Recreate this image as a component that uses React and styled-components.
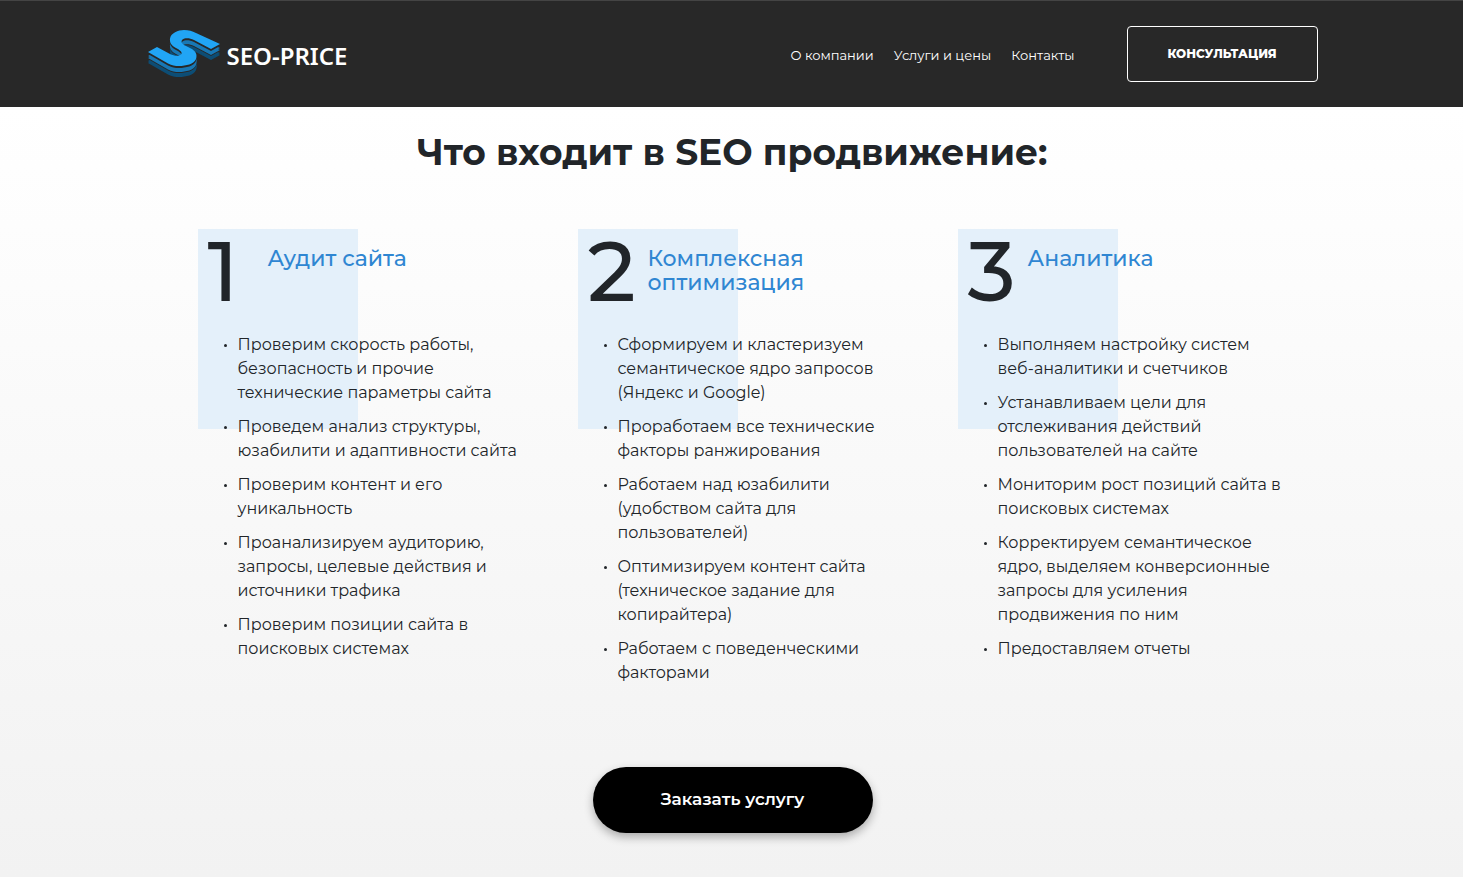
import styled, { createGlobalStyle } from 'styled-components'

const GlobalStyle = createGlobalStyle`
    * {
        box-sizing: border-box;
    }
    body {
        margin: 0;
        font-family: Montserrat, Inter, "Open Sans", sans-serif;
        font-size: 16px;
        line-height: 24px;
        color: #212529;
        background-color: #f2f2f2;
    }
`

const Header = styled.header`
    background-color: #282828;
    border-top: 1px solid #444;
    padding: 25px 20px 25px 22px;
`

const HeaderInner = styled.div`
    max-width: 1170px;
    margin: 0 auto;
    display: flex;
    align-items: center;
`

const Logo = styled.a`
    display: flex;
    align-items: center;
    gap: 6px;
    margin-right: auto;
    color: #fff;
    text-decoration: none;
`

const LogoText = styled.span`
    padding-top: 3px;
    font-family: "Noto Sans", "Open Sans", sans-serif;
    font-size: 24px;
    font-weight: 600;
`

const Nav = styled.nav`
    display: flex;
    gap: 20px;
    margin-right: 52px;
    padding-top: 2px;
`

const NavLink = styled.a`
    color: #fff;
    font-size: 13px;
    font-weight: 400;
    text-decoration: none;
`

const ConsultButton = styled.button`
    width: 191px;
    height: 56px;
    padding: 0 0 2px;
    border: 1px solid #fff;
    border-radius: 4px;
    background-color: transparent;
    color: #fff;
    font-family: inherit;
    font-size: 12px;
    font-weight: 800;
    cursor: pointer;
`

const Section = styled.section`
    padding: 23px 20px 44px 22px;
    background: linear-gradient(#fff, #f2f2f2);
`

const Title = styled.h1`
    margin: 0;
    font-size: 36px;
    line-height: 44px;
    font-weight: 700;
    text-align: center;
`

const Columns = styled.div`
    display: grid;
    grid-template-columns: repeat(3, 1fr);
    max-width: 1140px;
    margin: 55px auto 0;
`

const Column = styled.article`
    padding: 0 15px 0 35px;
`

const ColumnBody = styled.div`
    background: linear-gradient(#e4f0fa, #e4f0fa) no-repeat;
    background-size: 160px 200px;
    padding-left: 10px;
`

const ColumnHead = styled.div`
    display: flex;
    height: 104px;
`

const Number = styled.span`
    width: 60px;
    font-size: 84px;
    font-weight: 500;
    line-height: 84px;
`

const ColumnTitle = styled.h2`
    margin: 18px 0 0;
    font-size: 22px;
    line-height: 24px;
    font-weight: 500;
    color: #2f86d2;
    white-space: pre-line;
`

const List = styled.ul`
    margin: 0;
    padding: 0 0 0 30px;
    list-style: none;
    display: flex;
    flex-direction: column;
    gap: 10px;
`

const Item = styled.li`
    white-space: pre-line;
    &::before {
        content: "";
        float: left;
        width: 3px;
        height: 3px;
        margin: 11px 0 0 -14px;
        border-radius: 50%;
        background-color: #212529;
    }
`

const OrderButton = styled.button`
    display: block;
    width: 280px;
    height: 66px;
    margin: 82px auto 0;
    padding: 0 0 2px;
    border: none;
    border-radius: 33px;
    background-color: #000;
    color: #fff;
    font-family: inherit;
    font-size: 17px;
    font-weight: 600;
    box-shadow: 0 4px 10px rgba(0, 0, 0, 0.3);
    cursor: pointer;
`

const links = ['О компании', 'Услуги и цены', 'Контакты']

const columns = [
    {
        title: 'Аудит сайта',
        items: [
            'Проверим скорость работы,\nбезопасность и прочие\nтехнические параметры сайта',
            'Проведем анализ структуры,\nюзабилити и адаптивности сайта',
            'Проверим контент и его\nуникальность',
            'Проанализируем аудиторию,\nзапросы, целевые действия и\nисточники трафика',
            'Проверим позиции сайта в\nпоисковых системах',
        ],
    },
    {
        title: 'Комплексная\nоптимизация',
        items: [
            'Сформируем и кластеризуем\nсемантическое ядро запросов\n(Яндекс и Google)',
            'Проработаем все технические\nфакторы ранжирования',
            'Работаем над юзабилити\n(удобством сайта для\nпользователей)',
            'Оптимизируем контент сайта\n(техническое задание для\nкопирайтера)',
            'Работаем с поведенческими\nфакторами',
        ],
    },
    {
        title: 'Аналитика',
        items: [
            'Выполняем настройку систем\nвеб-аналитики и счетчиков',
            'Устанавливаем цели для\nотслеживания действий\nпользователей на сайте',
            'Мониторим рост позиций сайта в\nпоисковых системах',
            'Корректируем семантическое\nядро, выделяем конверсионные\nзапросы для усиления\nпродвижения по ним',
            'Предоставляем отчеты',
        ],
    },
]

const ribbon = 'M0 22 L9 17 L22 24 C26 26 31 26.5 33 24.5 C35 22.5 32 20 28 18 C23 15.5 21.5 12 22 8.5 C23 3 30 0 36 0 C41 0 44 1 48 3 L72 14 L63 19 L46 10 C42 8 37 7.5 34.5 9.5 C32.5 11.5 34 14 37 15.5 L43 18.5 C48 21 49.5 25 48 29 C46 34 38 36 31 36 C27 36 24 35.5 20 33.5 Z'

// the ribbon stacked in layers, from the lowest to the top one
const ribbonLayers = [
    { y: 11, fill: '#0d4e76' },
    { y: 10, fill: '#0d4e76' },
    { y: 9, fill: '#0d4e76' },
    { y: 7, fill: '#282828' },
    { y: 6, fill: '#1878b5' },
    { y: 4, fill: '#1878b5' },
    { y: 2, fill: '#282828' },
    { y: 1, fill: '#282828' },
    { y: 0, fill: '#21a5f5' },
]

const LogoMark = () => (
    <svg width="73" height="48" viewBox="0 0 73 48" aria-hidden="true">
        {ribbonLayers.map((layer) => (
            <path key={layer.y} d={ribbon} transform={`translate(0 ${layer.y})`} fill={layer.fill} />
        ))}
    </svg>
)

const App = () => {
    return (
        <>
            <GlobalStyle />
            <Header>
                <HeaderInner>
                    <Logo href="#">
                        <LogoMark />
                        <LogoText>SEO-PRICE</LogoText>
                    </Logo>
                    <Nav>
                        {links.map((link) => (
                            <NavLink href="#" key={link}>{link}</NavLink>
                        ))}
                    </Nav>
                    <ConsultButton>КОНСУЛЬТАЦИЯ</ConsultButton>
                </HeaderInner>
            </Header>
            <Section>
                <Title>Что входит в SEO продвижение:</Title>
                <Columns>
                    {columns.map((column, index) => (
                        <Column key={column.title}>
                            <ColumnBody>
                                <ColumnHead>
                                    <Number>{index + 1}</Number>
                                    <ColumnTitle>{column.title}</ColumnTitle>
                                </ColumnHead>
                                <List>
                                    {column.items.map((item) => (
                                        <Item key={item}>{item}</Item>
                                    ))}
                                </List>
                            </ColumnBody>
                        </Column>
                    ))}
                </Columns>
                <OrderButton>Заказать услугу</OrderButton>
            </Section>
        </>
    )
}

export default App
